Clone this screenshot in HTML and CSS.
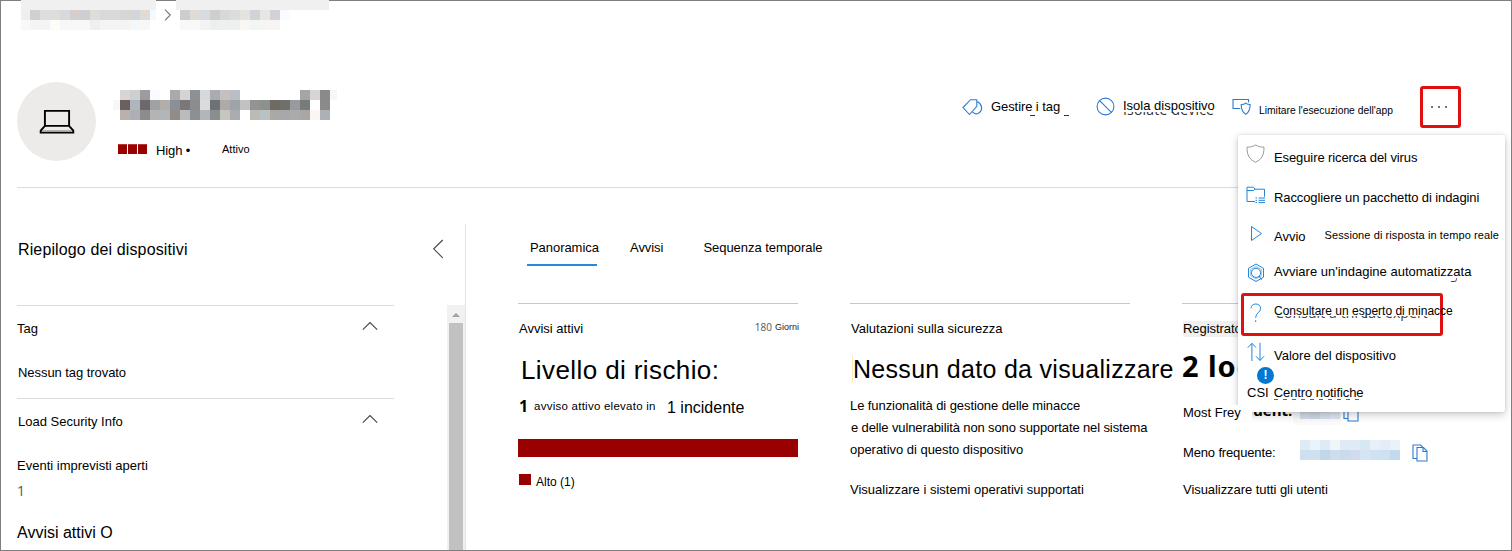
FILE: index.html
```html
<!DOCTYPE html>
<html lang="it">
<head>
<meta charset="utf-8">
<title>Dispositivo</title>
<link rel="stylesheet" href="styles.css">
</head>
<body>
<div class="frame">
  <nav class="crumbs">
    <div class="crumb crumb-a"></div>
    <svg class="crumb-sep" width="8" height="12" viewBox="0 0 8 12"><path d="M1 .7 6.3 6 1 11.3"/></svg>
    <div class="crumb crumb-b"></div>
  </nav>

  <header class="device">
    <div class="avatar">
      <svg width="36" height="26" viewBox="0 0 36 26"><path d="M5.900 1.900h24.200v15H5.900zM5.900 16.900h24.200l4.200 4.800v1.900H1.700v-1.900z"/><path class="lip" d="M3 21.900h30"/></svg>
    </div>
    <div class="identity">
      <div class="name"></div>
      <div class="status">
        <span class="risk"><i></i><i></i><i></i></span>
        <span class="level">High <b>•</b></span>
        <span class="active">Attivo</span>
      </div>
    </div>
    <div class="commands">
      <button class="cmd cmd-tag">
        <svg width="21" height="18" viewBox="0 0 21 18"><path d="M1 9.500 8.500 1.700h6.300v6.600L7.500 16.500zM15.500 3.800c5 2.500 5.200 8.200 2 10.700-2.200 1.700-5 1.500-7-.300"/></svg>
        <span class="cmd-text">Gestire i tag</span>
      </button>
      <button class="cmd cmd-isolate">
        <svg width="19" height="19" viewBox="0 0 19 19"><circle cx="9.500" cy="9.500" r="8.400"/><path d="m3.600 3.600 11.800 11.800"/></svg>
        <span class="cmd-text">Isola dispositivo</span>
        <span class="under" aria-hidden="true">Isolate device</span>
      </button>
      <button class="cmd cmd-limit">
        <svg width="19" height="18" viewBox="0 0 19 18"><path d="M8.200 10.500H1V1.500h15.500v3M9.200 6.500c2.100 0 3.600-.5 4.600-1.400 1 .9 2.500 1.400 4.300 1.400 0 4.500-.6 7.500-4.300 9.900-3.800-2.400-4.600-5.400-4.600-9.900z"/></svg>
        <span class="cmd-text">Limitare l'esecuzione dell'app</span>
      </button>
      <button class="more"><i></i><i></i><i></i></button>
    </div>
  </header>

  <div class="body">
    <aside class="side">
      <div class="side-head">
        <h2>Riepilogo dei dispositivi</h2>
        <svg width="12" height="20" viewBox="0 0 12 20"><path d="M10.700 1 1.700 9.800l9 9"/></svg>
      </div>
      <div class="side-scroll">
        <div class="side-list">
          <section class="group group-tag">
            <div class="group-head"><span>Tag</span><svg width="16" height="10" viewBox="0 0 16 10"><path d="m.8 8.700 7.200-7.200 7.200 7.200"/></svg></div>
            <p class="no-tag">Nessun tag trovato</p>
          </section>
          <section class="group">
            <div class="group-head"><span class="load">Load Security Info</span><svg width="16" height="10" viewBox="0 0 16 10"><path d="m.8 8.700 7.200-7.200 7.200 7.200"/></svg></div>
            <p class="open-events">Eventi imprevisti aperti</p>
            <p class="count">1</p>
            <p class="active-alerts">Avvisi attivi O</p>
          </section>
        </div>
        <div class="scrollbar"><span class="arrow"></span><span class="thumb"></span></div>
      </div>
    </aside>

    <main class="main">
      <div class="tabs">
        <span class="tab selected">Panoramica</span>
        <span class="tab">Avvisi</span>
        <span class="tab">Sequenza temporale</span>
      </div>
      <div class="cards">
        <section class="card">
          <div class="card-head"><h3>Avvisi attivi</h3><span class="period">180 <small>Giorni</small></span></div>
          <div class="headline risk-title">Livello di rischio:</div>
          <div class="summary"><b>1</b><span class="sum-text">avviso attivo elevato in</span><span class="sum-inc">1 incidente</span></div>
          <div class="bar"></div>
          <div class="legend"><i></i><span>Alto (1)</span></div>
        </section>
        <section class="card">
          <div class="card-head"><h3>Valutazioni sulla sicurezza</h3></div>
          <div class="headline no-data">Nessun dato da visualizzare</div>
          <p class="copy"><span class="l1">Le funzionalità di gestione delle minacce</span><br><span class="l2">e delle vulnerabilità non sono supportate nel sistema</span><br>operativo di questo dispositivo</p>
          <a class="card-link">Visualizzare i sistemi operativi supportati</a>
        </section>
        <section class="card users">
          <div class="card-head"><h3 class="logged">Registrato</h3></div>
          <div class="big">2 log</div>
          <div class="user-row first">
            <span class="label">Most Frey</span><b class="uent">uent:</b><span class="mask mask-a"></span>
            <svg width="16" height="18" viewBox="0 0 16 18"><path d="M5 14.500H1V1h7.500l2 2M5 3.500h6.500l3.500 3.500v10H5zM11 3.500V7.500h4"/></svg>
          </div>
          <div class="user-row second">
            <span class="label less">Meno frequente:</span><span class="mask mask-b"></span>
            <svg width="16" height="18" viewBox="0 0 16 18"><path d="M5 14.500H1V1h7.500l2 2M5 3.500h6.500l3.500 3.500v10H5zM11 3.500V7.500h4"/></svg>
          </div>
          <a class="card-link all-users">Visualizzare tutti gli utenti</a>
        </section>
      </div>
    </main>
  </div>

  <div class="menu">
    <div class="item m1">
      <svg class="grey" width="19" height="19" viewBox="0 0 19 19"><path d="M1 3.200c3.500 0 6-.8 8.500-2.200C12 2.400 14.500 3.200 18 3.200c0 7-1.500 11.800-8.500 15C2.500 15 1 10.200 1 3.200z"/></svg>
      <span>Eseguire ricerca del virus</span>
    </div>
    <div class="item m2">
      <svg width="20" height="18" viewBox="0 0 20 18"><path d="M9 15.500H1V1.200h6.500l1.500 2h9.500v7.500M1 4.500h6.500l1.500-1.300"/><path d="M9.500 12h1.500M12.500 12h6.500M9.500 14.300h1.500M12.500 14.300h6.500M9.500 16.600h1.500M12.500 16.600h6.500"/></svg>
      <span>Raccogliere un pacchetto di indagini</span>
    </div>
    <div class="item m3">
      <svg width="13" height="17" viewBox="0 0 13 17"><path d="M1.500 1.500v14L11.500 8.500z"/></svg>
      <span>Avvio</span><span class="live">Sessione di risposta in tempo reale</span>
    </div>
    <div class="item m4">
      <svg width="18" height="20" viewBox="0 0 18 20"><path d="m9 1 7.500 4.300v8.900L9 18.500l-7.500-4.300V5.300z"/><path d="m9 3.500 5.300 3v6.400L9 16l-5.300-3.100V6.500z" opacity=".5"/><circle cx="9" cy="9.800" r="4.600"/><path d="m12.200 13 2.400 3.800"/></svg>
      <span>Avviare un'indagine automatizzata</span>
    </div>
    <div class="item m5">
      <svg width="12" height="20" viewBox="0 0 12 20"><path d="M1 5.300C1 2.700 3 1 5.700 1c2.900 0 4.900 1.700 4.900 4.300 0 4.200-4.900 4.500-4.900 9.200v.500M5.700 17.200v1.800"/></svg>
      <span class="under" aria-hidden="true">Consult a threat expert</span>
      <span class="expert">Consultare un esperto di minacce</span>
    </div>
    <div class="item m6">
      <svg width="18" height="20" viewBox="0 0 18 20"><path d="M4.900 19V1.500M.8 5.600l4.100-4.300L9 5.600M13 .8v17.500M8.900 14.200l4.100 4.300 4.100-4.300"/></svg>
      <span>Valore del dispositivo</span>
    </div>
    <div class="badge">!</div>
    <div class="item m7"><span>CSI</span><span class="centre">Centro notifiche</span></div>
  </div>
</div>
</body>
</html>
```
FILE: styles.css
```css
* { box-sizing: border-box; }
body { margin: 0; background: #fff; font: 13px/15px "Liberation Sans", Arial, sans-serif; color: #000; }
h2, h3, p { margin: 0; font-weight: normal; font-size: 13px; }
svg { display: block; flex: none; fill: none; stroke: #2b7cd3; stroke-width: 1.1; }
button { border: 0; padding: 0; background: none; font: inherit; color: inherit; }
span, a { white-space: nowrap; }

.frame { position: relative; width: 1512px; height: 551px; border: 1px solid #7f7f7f; display: flex; flex-direction: column; }

/* breadcrumb */
.crumbs { display: flex; height: 30px; margin-top: -1px; padding-left: 20px; position: relative; }
.crumb { height: 30px; background-repeat: no-repeat; }
.crumb-a {
  width: 135px;
  background-image:
    linear-gradient(#f0f0f0, #f0f0f0),
    linear-gradient(90deg, #f0efed 0 9px, #d0d0d3 0 19px, #dddde0 0 29px, #e0dcd9 0 39px, #d8d9dc 0 49px, #d4cfcd 0 59px, #ceced2 0 69px, #deddda 0 79px, #d8dad8 0 89px, #d8d9d9 0 99px, #d8d5d3 0 109px, #d3d5da 0 119px, #e0dcd5 0 129px, #f3faff 0),
    linear-gradient(90deg, #f8f8f8 0 9px, #f4f4f4 0 29px, #fcfcf9 0 39px, #f7f7f7 0 69px, #f0eeee 0 79px, #f4f4f4 0 109px, #f4f8f8 0 119px, #f7f7f7 0 129px, #fff 0);
  background-size: 135px 10px;
  background-position: 0 0, 0 10px, 0 20px;
}
.crumb-sep { margin: 9px 4px 0 8px; stroke: #777; }
.crumb-b {
  width: 153px;
  background-image:
    linear-gradient(#f0f0f0, #f0f0f0),
    linear-gradient(90deg, #fff 0 4px, #cecdcd 0 14px, #dddcd6 0 24px, #d6dbe0 0 34px, #cfcecd 0 44px, #d5d8dc 0 54px, #dcdcdc 0 64px, #e6e3df 0 74px, #d1d3d6 0 84px, #e8e6e2 0 94px, #d5d0d6 0 104px, #fafbff 0 114px, #fff 0),
    linear-gradient(90deg, #fff 0 4px, #f8f8f8 0 24px, #f3f3f3 0 34px, #eceff0 0 44px, #eef0ef 0 64px, #f7f7f5 0 74px, #f3f4f4 0 84px, #f6f5f4 0 104px, #fff 0);
  background-size: 153px 10px;
  background-position: 0 0, 0 10px, 0 20px;
}

/* device header */
.device { display: flex; height: 158px; margin: 0 16px; border-bottom: 1px solid #dcdcdc; flex: none; }
.avatar { width: 79px; height: 79px; margin-top: 52px; border-radius: 50%; background: #edebe9; display: flex; justify-content: center; padding: 27px 0 0 1px; flex: none; }
.avatar svg { stroke: #000; stroke-width: 1.9; }
.avatar .lip { stroke: #999; stroke-width: 1.2; }
.identity { width: 866px; padding: 60px 0 0 17px; flex: none; }
.name {
  width: 224px; height: 30px; background-repeat: no-repeat;
  background-image:
    linear-gradient(90deg, #fff 0 7px, #d9d5d2 0 17px, #cdd0d0 0 27px, #9c9ca0 0 37px, #fafbff 0 47px, #fff 0 57px, #acaaa8 0 67px, #d5d4d4 0 77px, #8e9093 0 87px, #d5d9da 0 97px, #a9adb2 0 107px, #c4c0be 0 117px, #b9bec4 0 127px, #fff 0 187px, #a3a5a9 0 197px, #d8d4d4 0 207px, #8a8a8a 0 217px, #f2f8fb 0),
    linear-gradient(90deg, #f7f7f7 0 7px, #6b605e 0 17px, #adb6be 0 27px, #6f6769 0 37px, #a0a1a3 0 47px, #b0aea9 0 57px, #8a9097 0 67px, #7d7678 0 77px, #8a8d90 0 87px, #dadbdd 0 97px, #6e7274 0 107px, #aeaaa5 0 117px, #a0a3aa 0 127px, #c2c2c2 0 137px, #929494 0 147px, #8d918e 0 157px, #706b62 0 167px, #6e706b 0 177px, #9899a1 0 187px, #787b79 0 197px, #fff 0 207px, #8a8a8a 0 217px, #fff 0),
    linear-gradient(90deg, #fff 0 7px, #bab0ae 0 17px, #adafb4 0 27px, #8c8c8c 0 37px, #b4b4b4 0 47px, #b3b6b6 0 57px, #928b87 0 67px, #bbbbbd 0 77px, #8d8f92 0 87px, #b3b6b9 0 97px, #8a8e90 0 107px, #c6c5c0 0 117px, #a9adb1 0 127px, #fff 0 137px, #bdbab5 0 147px, #bbc0c4 0 157px, #aaa9a6 0 167px, #a8a8aa 0 177px, #aaa9ab 0 187px, #a9a6a5 0 197px, #fbf6f2 0 207px, #adb1b6 0 217px, #fff 0);
  background-size: 224px 10px;
  background-position: 0 0, 0 10px, 0 20px;
}
.status { display: flex; padding: 23px 0 0 5px; }
.risk { display: flex; gap: 1px; margin-top: 1px; }
.risk i { width: 9px; height: 10px; background: #900; border-top: 1px solid #b33; }
.level { width: 66px; margin-left: 9px; letter-spacing: -.1px; }
.level b { font-size: 13px; font-weight: normal; }
.active { font-size: 11px; line-height: 12px; }

.commands { display: flex; flex: none; padding-top: 52px; }
.cmd { display: flex; align-items: flex-start; text-align: left; position: relative; flex: none; }
.cmd-tag { width: 134px; }
.cmd-tag svg { margin-top: 16px; }
.cmd-tag .cmd-text { margin: 17px 0 0 8px; letter-spacing: -.08px; }
.cmd-tag::before, .cmd-tag::after { content: ""; position: absolute; top: 33px; left: 68px; width: 5px; height: 1px; background: #333; }
.cmd-tag::after { left: 102px; }
.cmd-isolate { width: 136px; }
.cmd-isolate svg { margin-top: 15px; }
.cmd-isolate .cmd-text { margin: 16px 0 0 8px; }
.cmd-isolate .under { position: absolute; left: 27px; top: 18px; font: 14px/20px "Open Sans", sans-serif; letter-spacing: .2px; color: #333; clip-path: inset(12px 0 4px 0); }
.cmd-limit { width: 188px; }
.cmd-limit svg { margin-top: 16px; }
.cmd-limit .cmd-text { margin: 23px 0 0 8px; font-size: 10.3px; line-height: 12px; }
.more { width: 41px; height: 42px; margin-top: 4px; border: 3px solid #e01010; border-radius: 3px; display: flex; justify-content: center; align-items: center; gap: 5px; padding-right: 3px; flex: none; }
.more i { width: 2px; height: 2px; background: #444; border-radius: 1px; }

/* body */
.body { display: flex; height: 362px; padding-left: 16px; flex: none; }
.side { width: 449px; height: 326px; margin-top: 36px; border-right: 1px solid #e3e3e3; flex: none; }
.side-head { display: flex; height: 81px; justify-content: space-between; padding: 17px 21px 0 1px; }
.side-head h2 { font-size: 16px; line-height: 17px; letter-spacing: .13px; }
.side-head svg { margin-top: -2px; }
.side svg { stroke: #444; }
.side-scroll { display: flex; justify-content: space-between; height: 245px; }
.side-list { width: 377px; }
.group { border-top: 1px solid #dcdcdc; padding-top: 15px; }
.group-tag { height: 93px; }
.group-head { display: flex; justify-content: space-between; padding-right: 16px; }
.no-tag { margin: 29px 0 0 1px; letter-spacing: -.06px; }
.load { margin-left: 1px; }
.open-events { margin-top: 29px; }
.count { margin: 8px 0 0 0; font: 14px/19px "Open Sans", sans-serif; color: #555; }
.active-alerts { margin-top: 24px; font-size: 16px; line-height: 17px; }
.scrollbar { width: 18px; background: #f1f1f1; padding: 8px 2px 0; display: flex; flex-direction: column; align-items: center; }
.arrow { border: 4px solid transparent; border-top: 0; border-bottom-color: #a3a3a3; margin-bottom: 6px; }
.thumb { flex: 1; width: 14px; background: #c1c1c1; }

.main { padding-left: 52px; width: 1046px; flex: none; }
.tabs { display: flex; height: 115px; padding: 52px 0 0 9px; }
.tab { height: 26px; letter-spacing: -.05px; margin-right: 31px; }
.tab:last-child { margin-left: 9px; }
.tab.selected { border-bottom: 2px solid #2b88d8; padding-left: 3px; width: 70px; margin-right: 33px; }
.cards { display: flex; gap: 52px; }
.card { width: 280px; border-top: 1px solid #c8c8c8; flex: none; }
.card:nth-child(3) { width: 290px; }
.card-head { display: flex; justify-content: space-between; height: 32px; padding: 17px 0 0 1px; margin-right: -1px; }
.period { display: flex; font: 10px/12px "Open Sans", sans-serif; color: #555; gap: 3px; }
.period small { font: 9px/13px "Liberation Sans", sans-serif; color: #222; }
.headline { font-size: 26px; line-height: 30px; margin-top: 19px; white-space: nowrap; letter-spacing: .4px; padding-left: 3px; }
.no-data { font-size: 25px; letter-spacing: .3px; line-height: 28px; border-left: 1px solid #fde9c0; margin-left: 2px; padding-left: 0; }
.summary { display: flex; margin-top: 13px; }
.summary b { width: 16px; padding-left: 1px; font: bold 16px/20px "Open Sans", sans-serif; margin-top: -2px; }
.sum-text { width: 133px; font-size: 11.5px; line-height: 12px; letter-spacing: .25px; margin-top: 2px; }
.sum-inc { font-size: 16px; line-height: 17px; margin-top: 1px; }
.bar { height: 18px; background: #900; margin-top: 23px; }
.legend { display: flex; padding: 17px 0 0 1px; }
.legend i { width: 12px; height: 11px; background: #900; }
.legend span { font-size: 12px; line-height: 14px; margin: 1px 0 0 5px; }
.copy { line-height: 22px; margin-top: 12px; letter-spacing: -.03px; }
.l1 { letter-spacing: -.08px; }
.l2 { letter-spacing: -.12px; padding-left: 1px; }
.card-link { display: block; margin-top: 21px; }
.users .card-head { height: 34px; }
.logged { background: #f0f0f0; height: 16px; letter-spacing: -.05px; }
.users .big { font: bold 29px/40px "Noto Sans", sans-serif; height: 68px; margin: 8px 0 -9px 0; letter-spacing: .9px; }
.user-row { display: flex; height: 40px; }
.user-row .label { width: 70px; height: 16px; padding-left: 1px; }
.first .label { position: relative; z-index: 3; background: #fff; }
.user-row .less { width: 118px; letter-spacing: -.15px; }
.card-link.all-users { margin: -3px 0 0 1px; letter-spacing: -.06px; }
.uent { font: bold 15px/15px "Open Sans", sans-serif; width: 41px; margin-top: -2px; padding-left: 1px; }
.mask { height: 20px; flex: none; }
.mask-a { width: 48px; background: linear-gradient(90deg, #f7f7f7 0 7px, #d0dce8 0 17px, #ced8e2 0 27px, #d6e0ec 0 37px, #dbe7f2 0 47px, #f7f7f7 0) 0 -6px no-repeat, #fafafa; background-size: 48px 20px, auto; }
.mask-b {
  width: 100px; margin-top: -5px; background-repeat: no-repeat;
  background-image:
    linear-gradient(90deg, #deebf5 0 10px, #e8f3fb 0 20px, #deebf5 0 30px, #f0f5fa 0 40px, #e0e9f5 0 50px, #dfeaf8 0 60px, #d6e9f3 0 70px, #e6f0f6 0 80px, #e3ecf8 0 90px, #e9f1f9 0),
    linear-gradient(90deg, #cddff0 0 10px, #cfe0ef 0 20px, #bfd6eb 0 30px, #cdddee 0 40px, #cadbec 0 50px, #d1dbee 0 60px, #d4e4f2 0 70px, #d0e2f1 0 80px, #cde1f0 0 90px, #c3d9ee 0);
  background-size: 100px 10px; background-position: 0 0, 0 10px;
}
.first svg { margin: -1px 0 0 2px; }
.second svg { margin: -1px 0 0 12px; }

/* overflow menu */
.menu { position: absolute; z-index: 2; left: 1237px; top: 134px; width: 267px; height: 277px; background: #fff; border-radius: 2px; box-shadow: 0 3px 8px rgba(0,0,0,.2), 0 0 3px rgba(0,0,0,.12); padding-left: 9px; }
.item { display: flex; align-items: flex-start; position: relative; }
.item svg { stroke: #2484d8; stroke-width: 1; }
.item svg.grey { stroke: #999; margin-left: -1px; margin-right: 1px; }
.m1 { height: 50px; padding-top: 9px; }
.m1 span { margin: 6px 0 0 8px; letter-spacing: -.1px; }
.m2 { height: 41px; }
.m2 svg { margin: 1px 1px 0 -1px; }
.m2 span { margin: 5px 0 0 7px; letter-spacing: -.1px; }
.m3 { height: 37px; }
.m3 svg { margin: -1px 0 0 3px; }
.m3 span { margin: 3px 0 0 11px; }
.m3 .live { font-size: 11px; line-height: 12px; letter-spacing: .09px; margin: 3px 0 0 19px; }
.m4 { height: 30px; }
.m4 svg { margin-right: 1px; }
.m4 span { margin: 1px 0 0 8px; }
.m4::after { content: ""; position: absolute; left: 204px; top: 15px; width: 5px; height: 3px; border-bottom: 1px solid #444; border-right: 1px solid #777; border-radius: 0 0 3px 0; }
.m5 { width: 202px; height: 43px; margin-left: -6px; border: 3px solid #e01010; border-radius: 3px; }
.m5 svg { margin: 7px 0 0 6px; }
.m5 .expert { margin: 8px 0 0 12px; font-size: 12px; line-height: 14px; }
.m5 .under { position: absolute; left: 31px; top: 7px; font: 14px/20px "Open Sans", sans-serif; letter-spacing: .1px; color: #444; clip-path: inset(13px 0 2px 0); }
.m6 { padding-top: 7px; height: 31px; }
.m6 svg { margin: -1px 0 0 0; }
.m6 span { margin: 5px 0 0 9px; }
.badge { width: 17px; height: 17px; margin: 0 0 0 10px; border-radius: 50%; background: #0078d4; color: #fff; font-weight: bold; font-size: 12px; line-height: 17px; text-align: center; }
.m7 { padding-top: 1px; }
.centre { margin-left: 5px; letter-spacing: -.08px; background: repeating-linear-gradient(90deg, #666 0 4px, #fff 0 9px) 0 14px / 86px 1px no-repeat; }
```
